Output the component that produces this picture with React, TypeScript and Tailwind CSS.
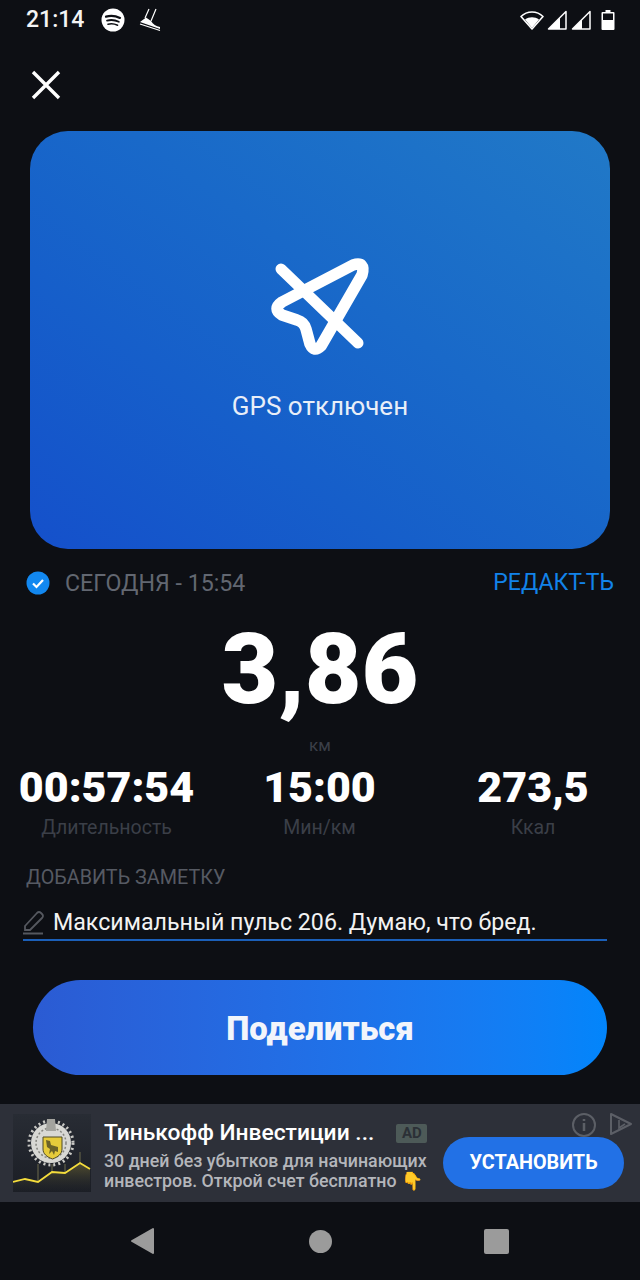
import React from "react";

function Spotify() {
  return (
    <svg width="24" height="24" viewBox="0 0 24 24" fill="none">
      <circle cx="12" cy="12" r="11.5" fill="#fff" />
      <path d="M5 8.6c4.6-1.2 9.6-.8 14 1.3" stroke="#0d0f14" strokeWidth="2.2" strokeLinecap="round" />
      <path d="M6 12.6c3.9-1 8.2-.6 11.8 1.2" stroke="#0d0f14" strokeWidth="1.8" strokeLinecap="round" />
      <path d="M7 16.2c3.2-.8 6.6-.4 9.6 1" stroke="#0d0f14" strokeWidth="1.5" strokeLinecap="round" />
    </svg>
  );
}

function Shoe() {
  return (
    <svg width="22" height="24" viewBox="0 0 22 24" fill="none">
      <path d="M10 1 6 10M17 1l-5 12" stroke="#fff" strokeWidth="1.200" />
      <path d="M1 14l6-4.500 5 3.500c2 3.500 5 5 9 6v2z" fill="#fff" />
      <path d="M1 16 21 22.500" stroke="#fff" strokeWidth="1.300" />
    </svg>
  );
}

function StatusRight() {
  return (
    <div className="flex items-center">
      <svg width="24" height="20" viewBox="0 0 24 20" fill="none">
        <path d="M1 6.500C7 .500 17 .500 23 6.500L12 19z" stroke="#fff" strokeWidth="1.600" strokeLinejoin="round" />
        <path d="M5 9.500c4-3 10-3 14 0L12 18z" fill="#fff" />
      </svg>
      <svg className="ml-[3px]" width="20" height="20" viewBox="0 0 20 20" fill="none">
        <path d="M19 1.500V19H1.500z" stroke="#fff" strokeWidth="1.500" strokeLinejoin="round" />
        <path d="M13 7.500V19H1.500z" fill="#fff" />
      </svg>
      <svg className="ml-[4px]" width="20" height="20" viewBox="0 0 20 20" fill="none">
        <path d="M19 1.500V19H1.500z" stroke="#fff" strokeWidth="1.500" strokeLinejoin="round" />
        <path d="M11 9.500V19H1.500z" fill="#fff" />
      </svg>
      <svg className="ml-[10px]" width="14" height="22" viewBox="0 0 14 22" fill="none">
        <path d="M4.500 1h5v2h3a1 1 0 0 1 1 1v16a1 1 0 0 1-1 1h-11a1 1 0 0 1-1-1V4a1 1 0 0 1 1-1h3z" fill="#fff" />
        <rect x="2" y="4.500" width="10" height="6.500" fill="#0d0f14" />
      </svg>
    </div>
  );
}

function Stat({ value, label, className }: { value: string; label: string; className: string }) {
  return (
    <div className={"flex flex-col items-center " + className}>
      <div className="text-[43px] leading-[48px] font-black text-white whitespace-nowrap">{value}</div>
      <div className="text-[19.500px] leading-[24px] mt-[5px] text-[#3b3f48] whitespace-nowrap">{label}</div>
    </div>
  );
}

function AdImage() {
  return (
    <svg width="78" height="78" viewBox="0 0 78 78" className="shrink-0">
      <defs>
        <linearGradient id="adBg" x1="0" y1="0" x2="0" y2="1">
          <stop offset="0" stopColor="#282c34" />
          <stop offset="1" stopColor="#1b1e25" />
        </linearGradient>
        <linearGradient id="chartFill" x1="0" y1="0" x2="0" y2="1">
          <stop offset="0" stopColor="#6b6230" stopOpacity="0.7" />
          <stop offset="1" stopColor="#23272e" stopOpacity="0.1" />
        </linearGradient>
      </defs>
      <rect width="78" height="78" fill="url(#adBg)" />
      <path d="M25 50v18M39 50v8M52 50v9M67 38v11" stroke="#6d6a4c" strokeWidth="1" />
      {/* crest */}
      <circle cx="38" cy="29" r="20" fill="#d8d8d4" />
      <circle cx="38" cy="29" r="22" fill="none" stroke="#c9c9c5" strokeWidth="3" strokeDasharray="2 3" />
      <circle cx="38" cy="29" r="15" fill="none" stroke="#85857f" strokeWidth="1.500" strokeDasharray="2 2" />
      <path d="M34 5h8l1 12h-10z" fill="#a3a39e" />
      <path d="M30 23h19v12c0 5-4 8-9.500 10-5.500-2-9.500-5-9.500-10z" fill="#e6cb3b" stroke="#4f4a26" strokeWidth="1" />
      <path d="M33 26l4 1 1 4 7 2v5l-3-1-1 4-2-4-3 3 1-5-3-2z" fill="#6b6228" />
      {/* chart */}
      <path d="M0 68l12-3 13 3 14-10 13 1 15-10 10 6v23H0z" fill="url(#chartFill)" />
      <path d="M0 68l12-3 13 3 14-10 13 1 15-10 10 6" fill="none" stroke="#f4dc3c" strokeWidth="1.800" />
    </svg>
  );
}

export default function App() {
  return (
    <div className="w-[640px] h-[1280px] overflow-hidden bg-[#0d0f14] text-white flex flex-col font-['Roboto',sans-serif]">
      {/* status bar */}
      <div className="h-[40px] shrink-0 pl-[26px] pr-[25px] flex items-center">
        <span className="text-[23px] font-medium text-[#f4f4f4]">21:14</span>
        <div className="ml-[17px]"><Spotify /></div>
        <div className="ml-[14px]"><Shoe /></div>
        <div className="ml-auto"><StatusRight /></div>
      </div>

      {/* close */}
      <div className="h-[91px] shrink-0 pl-[30px] pt-[29px]">
        <svg width="32" height="32" viewBox="0 0 32 32" fill="none">
          <path d="M3 3l26 26M29 3L3 29" stroke="#fff" strokeWidth="3.400" />
        </svg>
      </div>

      {/* map card */}
      <div className="mx-[30px] h-[418px] shrink-0 rounded-[38px] bg-gradient-to-tr from-[#1550cb] to-[#2179c7] flex flex-col items-center">
        <svg className="mt-[119px]" width="120" height="110" viewBox="0 0 120 110" fill="none">
          <path d="M21 19l77 74" stroke="#fff" strokeWidth="11" strokeLinecap="round" />
          <path
            d="M93 15 22 52Q12 59 22 65L37 70Q44 72 46 79L50 94Q54 103 61 96L102 25Q106 11 93 15Z"
            stroke="#fff"
            strokeWidth="11.500"
            strokeLinejoin="round"
          />
        </svg>
        <div className="mt-[30px] text-[26px] leading-[32px] text-[#e8eef8]">GPS отключен</div>
      </div>

      {/* date row */}
      <div className="h-[34px] mt-[17px] shrink-0 pl-[26px] pr-[26px] flex items-center">
        <svg width="24" height="24" viewBox="0 0 24 24" fill="none">
          <circle cx="12" cy="12" r="11.500" fill="#1288f0" />
          <path d="M7 12.500l3.500 3.500L17 9" stroke="#fff" strokeWidth="2.200" />
        </svg>
        <span className="ml-[15px] text-[23.200px] text-[#626771]">СЕГОДНЯ - 15:54</span>
        <span className="ml-auto text-[23px] text-[#1283ea]">РЕДАКТ-ТЬ</span>
      </div>

      {/* distance */}
      <div className="mt-[14px] shrink-0 text-center text-[98px] leading-[112px] font-black text-white">3,86</div>
      <div className="text-center text-[17px] leading-[20px] text-[#3b3f48] mt-[9px]">км</div>

      {/* stats */}
      <div className="h-[77px] mt-[8px] shrink-0 flex">
        <Stat value="00:57:54" label="Длительность" className="w-[213px]" />
        <Stat value="15:00" label="Мин/км" className="w-[213px]" />
        <Stat value="273,5" label="Ккал" className="w-[214px]" />
      </div>

      {/* note */}
      <div className="mt-[26px] pl-[26px] text-[19.800px] leading-[24px] text-[#565a63]">ДОБАВИТЬ ЗАМЕТКУ</div>
      <div className="mt-[16px] ml-[23px] mr-[33px] h-[35px] border-b-[2px] border-[#1b5fb8] flex items-center">
        <svg width="22" height="26" viewBox="0 0 22 26" fill="none" className="shrink-0">
          <path d="M2 16 14 3Q16 1 18 3L19 4Q21 6 19 8L7 20H2Z" stroke="#55585f" strokeWidth="1.800" />
          <path d="M0 23.500h20" stroke="#55585f" strokeWidth="2" />
        </svg>
        <span className="ml-[8px] text-[23.200px] text-[#f2f2f2] whitespace-nowrap">Максимальный пульс 206. Думаю, что бред.</span>
      </div>

      {/* share */}
      <div className="mt-[39px] mx-[33px] h-[95px] pt-[4px] shrink-0 rounded-full bg-gradient-to-r from-[#2b5bd3] to-[#0285fb] flex items-center justify-center text-[32.800px] font-black text-[#f2f5fb]">
        Поделиться
      </div>

      {/* ad */}
      <div className="relative mt-[29px] h-[98px] shrink-0 bg-[#2d3039] flex items-center pl-[13px]">
        <AdImage />
        <div className="ml-[13px] flex flex-col pt-[4px]">
          <div className="flex items-center">
            <span className="text-[22.800px] leading-[28px] font-medium text-white whitespace-nowrap">Тинькофф Инвестиции ...</span>
            <span className="ml-[22px] w-[31px] h-[19px] rounded-[2px] bg-[#4d5a58] text-[#2b3036] text-[15px] font-bold leading-[19px] text-center">AD</span>
          </div>
          <div className="mt-[4px] text-[17.800px] leading-[20px] font-medium text-[#b4b6bb] whitespace-nowrap">30 дней без убытков для начинающих</div>
          <div className="text-[17.800px] leading-[20px] font-medium text-[#b4b6bb] whitespace-nowrap">инвестров. Открой счет бесплатно 👇</div>
        </div>
        <div className="absolute left-[443px] top-[33px] w-[181px] h-[52px] rounded-full bg-[#2271e6] flex items-center justify-center text-[19.800px] font-bold text-white">УСТАНОВИТЬ</div>
        <svg className="absolute left-[571px] top-[8px]" width="26" height="26" viewBox="0 0 26 26" fill="none">
          <circle cx="13" cy="13" r="11" stroke="#5c5f66" strokeWidth="2" />
          <path d="M13 11v8M13 7v2" stroke="#5c5f66" strokeWidth="2.500" />
        </svg>
        <svg className="absolute left-[609px] top-[8px]" width="24" height="24" viewBox="0 0 24 24" fill="none">
          <path d="M2 2l20 10L2 22z" stroke="#5c5f66" strokeWidth="2" strokeLinejoin="round" />
          <path d="M10 8v8l6-4" stroke="#5c5f66" strokeWidth="1.600" />
        </svg>
      </div>

      {/* nav bar */}
      <div className="flex-1 flex items-center">
        <svg className="ml-[130px]" width="26" height="28" viewBox="0 0 26 28">
          <path d="M23 2v24L2 14z" fill="#9b9b9b" stroke="#9b9b9b" strokeWidth="2" strokeLinejoin="round" />
        </svg>
        <div className="ml-[153px] w-[23px] h-[23px] rounded-full bg-[#9b9b9b]" />
        <div className="ml-[152px] w-[25px] h-[25px] rounded-[2px] bg-[#9b9b9b]" />
      </div>
    </div>
  );
}
